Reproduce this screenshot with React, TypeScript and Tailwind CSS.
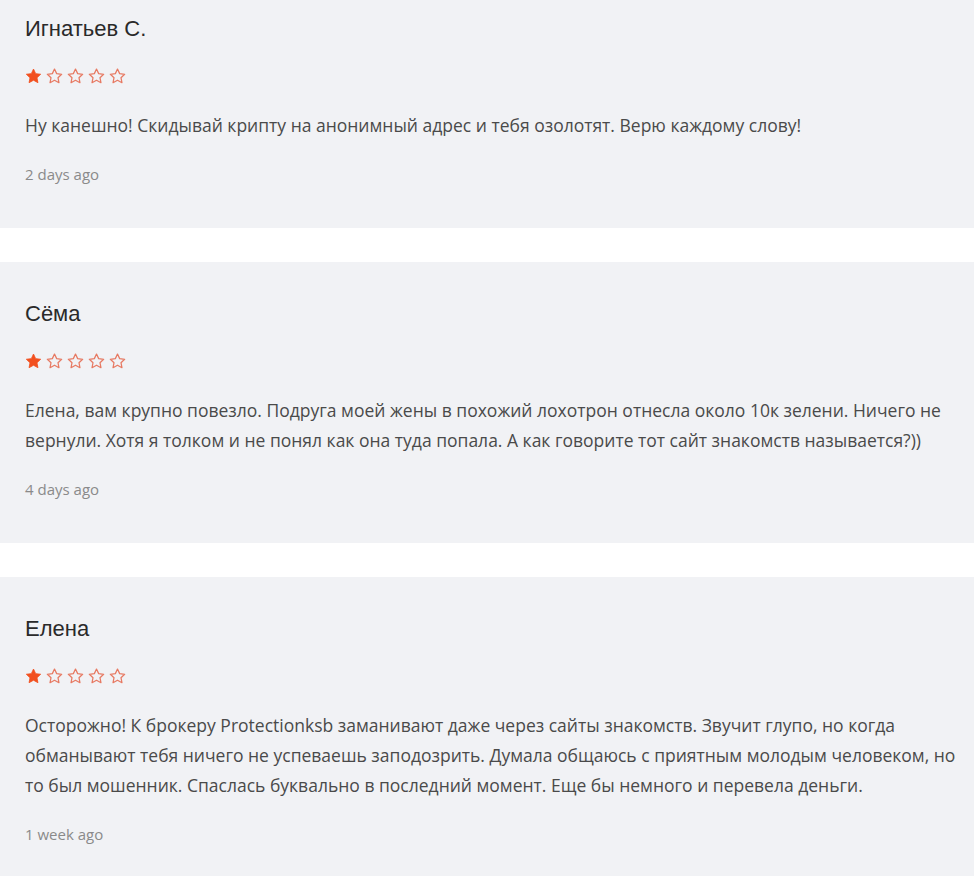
import React from "react";

type Review = { name: string; text: string; date: string; rating: number };

const reviews: Review[] = [
  {
    name: "Игнатьев С.",
    text: "Ну канешно! Скидывай крипту на анонимный адрес и тебя озолотят. Верю каждому слову!",
    date: "2 days ago",
    rating: 1,
  },
  {
    name: "Сёма",
    text: "Елена, вам крупно повезло. Подруга моей жены в похожий лохотрон отнесла около 10к зелени. Ничего не вернули. Хотя я толком и не понял как она туда попала. А как говорите тот сайт знакомств называется?))",
    date: "4 days ago",
    rating: 1,
  },
  {
    name: "Елена",
    text: "Осторожно! К брокеру Protectionksb заманивают даже через сайты знакомств. Звучит глупо, но когда обманывают тебя ничего не успеваешь заподозрить. Думала общаюсь с приятным молодым человеком, но то был мошенник. Спаслась буквально в последний момент. Еще бы немного и перевела деньги.",
    date: "1 week ago",
    rating: 1,
  },
];

function Star({ filled }: { filled: boolean }) {
  return (
    <svg width="17" height="16" viewBox="0 0 24 23" className="block">
      <path
        d="M12 1.5l3.1 6.6 7.2.9-5.3 5 1.4 7.1L12 17.6 5.6 21.1 7 14l-5.3-5 7.2-.9z"
        fill={filled ? "#f2501f" : "none"}
        stroke={filled ? "#f2501f" : "#e77a63"}
        strokeWidth={filled ? 1.2 : 1.8}
        strokeLinejoin="round"
      />
    </svg>
  );
}

function Card({ r }: { r: Review }) {
  return (
    <div className="bg-[#f1f2f5] pl-[25px] pr-[14px] pt-[40px] pb-[44px]">
      <div className="text-[22px] leading-[24px] text-[#2a2a2a] font-['Liberation_Sans',Arial,sans-serif]">
        {r.name}
      </div>
      <div className="mt-[27px] flex gap-[4px] h-[16px]">
        {[0, 1, 2, 3, 4].map((i) => (
          <Star key={i} filled={i < r.rating} />
        ))}
      </div>
      <p className="mt-[26px] text-[17.5px] leading-[30px] text-[#4a4a4a] font-['Open_Sans',sans-serif]">
        {r.text}
      </p>
      <div className="mt-[24px] text-[15px] leading-[20px] text-[#8a8a8a] font-['Open_Sans',sans-serif]">
        {r.date}
      </div>
    </div>
  );
}

export default function App() {
  return (
    <div className="w-[974px] h-[876px] overflow-hidden bg-white">
      <div className="-mt-[23px] flex flex-col gap-[34px]">
        {reviews.map((r, i) => (
          <Card key={i} r={r} />
        ))}
      </div>
    </div>
  );
}
